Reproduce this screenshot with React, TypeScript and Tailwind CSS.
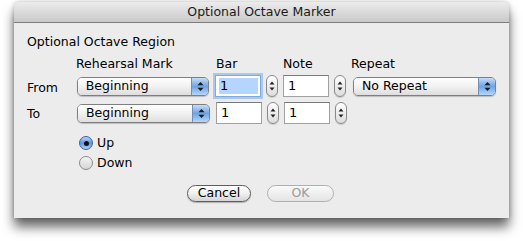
import React from 'react'

const font = { fontFamily: '"DejaVu Sans", "Liberation Sans", sans-serif' }

function Arrows({ color = '#1a1a1a' }: { color?: string }) {
  return (
    <svg width="7" height="11" viewBox="0 0 7 11">
      <path d="M3.5 1 L6.5 4.2 L0.5 4.2 Z" fill={color} />
      <path d="M3.5 10 L6.5 6.8 L0.5 6.8 Z" fill={color} />
    </svg>
  )
}

function PopUp({ label, width }: { label: string; width: string }) {
  return (
    <div
      className={`${width} h-[19px] flex rounded-[5px] border border-[#7f7f7f] overflow-hidden shadow-[0_1px_1px_rgba(0,0,0,0.2)]`}
    >
      <div className="flex-1 flex items-center pl-[8px] text-[12.5px] text-black bg-gradient-to-b from-[#ffffff] via-[#f1f1f1] to-[#dedede]">
        {label}
      </div>
      <div className="w-[17px] flex items-center justify-center border-l border-[#6f8fb8] bg-gradient-to-b from-[#c6dcf6] via-[#6ea3e6] to-[#b6d6fa]">
        <Arrows />
      </div>
    </div>
  )
}

function Stepper() {
  return (
    <div className="w-[12px] h-[22px] rounded-full border border-[#8a8a8a] bg-gradient-to-b from-[#ffffff] to-[#dcdcdc] flex items-center justify-center shadow-[0_1px_1px_rgba(0,0,0,0.15)]">
      <svg width="6" height="12" viewBox="0 0 6 12">
        <path d="M3 1.5 L5.5 4.5 L0.5 4.5 Z" fill="#222" />
        <path d="M3 10.5 L5.5 7.5 L0.5 7.5 Z" fill="#222" />
      </svg>
    </div>
  )
}

function Field({ value, focused }: { value: string; focused?: boolean }) {
  return (
    <div
      className={`w-[46px] h-[22px] flex items-center bg-white border ${
        focused
          ? 'border-[#7fa9df] shadow-[0_0_0_2px_#a9c9f0]'
          : 'border-[#a0a0a0] border-t-[#7a7a7a]'
      }`}
    >
      <span className={`ml-[3px] text-[13px] leading-[16px] px-[1px] ${focused ? 'bg-[#b5d5ff]' : ''}`}>
        {value}
      </span>
      {focused && <span className="flex-1 h-[16px] bg-[#b5d5ff] mr-[2px]" />}
    </div>
  )
}

function Radio({ checked, label }: { checked?: boolean; label: string }) {
  return (
    <div className="flex items-center h-[20px]">
      <div
        className={`w-[14px] h-[14px] rounded-full border flex items-center justify-center ${
          checked
            ? 'border-[#3a5f95] bg-gradient-to-b from-[#bcd6f5] via-[#5b97e2] to-[#aed0f7]'
            : 'border-[#8a8a8a] bg-gradient-to-b from-[#f4f4f4] to-[#d6d6d6]'
        }`}
      >
        {checked && <div className="w-[5px] h-[5px] rounded-full bg-[#111]" />}
      </div>
      <span className="ml-[4px] text-[12.5px] text-black">{label}</span>
    </div>
  )
}

export default function App() {
  return (
    <div className="w-[523px] h-[241px] bg-white pt-[2px] pl-[14px]" style={font}>
      <div className="w-[495px] h-[216px] flex flex-col bg-[#ececec] rounded-t-[5px] shadow-[0_9px_12px_rgba(0,0,0,0.6),0_0_4px_rgba(0,0,0,0.25)]">
        <div className="h-[21px] flex items-center justify-center rounded-t-[5px] bg-gradient-to-b from-[#ececec] to-[#c9c9c9] border-b border-[#7d7d7d] text-[12.5px] text-[#1a1a1a]">
          Optional Octave Marker
        </div>
        <div className="flex flex-col px-[13px] pt-[11px]">
          <div className="text-[12.5px] text-black h-[16px] leading-[16px]">Optional Octave Region</div>

          <div className="flex items-end h-[18px] mt-[6px] text-[12.5px] text-black">
            <span className="ml-[49px] w-[140px]">Rehearsal Mark</span>
            <span className="w-[67px]">Bar</span>
            <span className="w-[68px]">Note</span>
            <span>Repeat</span>
          </div>

          <div className="flex items-center mt-[1px] h-[22px]">
            <span className="w-[50px] text-[12.5px] text-black pt-[4px]">From</span>
            <PopUp label="Beginning" width="w-[133px]" />
            <div className="ml-[6px]">
              <Field value="1" focused />
            </div>
            <div className="ml-[5px]">
              <Stepper />
            </div>
            <div className="ml-[5px]">
              <Field value="1" />
            </div>
            <div className="ml-[5px]">
              <Stepper />
            </div>
            <div className="ml-[7px]">
              <PopUp label="No Repeat" width="w-[143px]" />
            </div>
          </div>

          <div className="flex items-center mt-[5px] h-[22px]">
            <span className="w-[50px] text-[12.5px] text-black pt-[2px]">To</span>
            <PopUp label="Beginning" width="w-[133px]" />
            <div className="ml-[6px]">
              <Field value="1" />
            </div>
            <div className="ml-[5px]">
              <Stepper />
            </div>
            <div className="ml-[5px]">
              <Field value="1" />
            </div>
            <div className="ml-[5px]">
              <Stepper />
            </div>
          </div>

          <div className="flex flex-col ml-[52px] mt-[9px]">
            <Radio checked label="Up" />
            <Radio label="Down" />
          </div>

          <div className="flex justify-center gap-[16px] mt-[12px] pr-[2px]">
            <button className="w-[64px] h-[17px] rounded-full border border-[#5e5e5e] bg-gradient-to-b from-[#ffffff] via-[#f0f0f0] to-[#d4d4d4] text-[12.5px] text-black leading-none shadow-[0_1px_1px_rgba(0,0,0,0.25)]">
              Cancel
            </button>
            <button
              disabled
              className="w-[67px] h-[17px] rounded-full border border-[#b0b0b0] bg-gradient-to-b from-[#fafafa] to-[#e4e4e4] text-[12.5px] text-[#9a9a9a] leading-none"
            >
              OK
            </button>
          </div>
        </div>
      </div>
    </div>
  )
}
